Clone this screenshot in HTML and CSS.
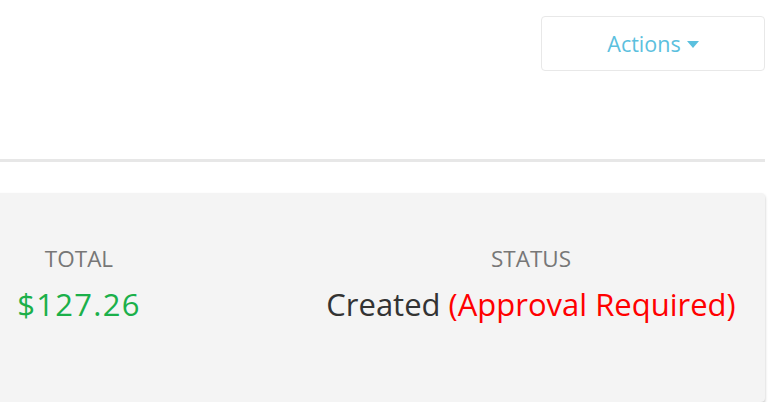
FILE: index.html
```html
<!DOCTYPE html>
<html lang="en">
<head>
    <meta charset="UTF-8">
    <meta name="viewport" content="width=device-width, initial-scale=1.0">
    <title>Order</title>
    <link rel="stylesheet" href="styles.css">
</head>
<body>
    <div class="page">
        <div class="header">
            <button class="actions-btn" type="button">
                Actions
                <svg class="caret" width="12" height="7" viewBox="0 0 12 7"><path d="M0 0h12L6 7z" fill="currentColor"/></svg>
            </button>
        </div>

        <hr class="divider">

        <div class="summary">
            <div class="summary-item">
                <div class="summary-label">Total</div>
                <div class="summary-value total">$127.26</div>
            </div>
            <div class="summary-item">
                <div class="summary-label">Status</div>
                <div class="summary-value">Created <span class="required">(Approval Required)</span></div>
            </div>
        </div>
    </div>
</body>
</html>
```

FILE: styles.css
```css
body {
    margin: 0;
    font-family: "Open Sans", sans-serif;
    background: #fff;
    overflow: hidden;
}
.page {
    width: 765px;
}
.header {
    display: flex;
    justify-content: flex-end;
    padding-top: 16px;
    height: 55px;
}
.actions-btn {
    width: 224px;
    height: 55px;
    border: 1px solid #e8e8e8;
    border-radius: 4px;
    background: #fff;
    color: #5bc0de;
    font-family: inherit;
    font-size: 21.5px;
    display: flex;
    align-items: center;
    justify-content: center;
    gap: 6px;
    padding: 0;
}
.caret {
    margin-top: 2px;
}
.divider {
    border: 0;
    height: 3px;
    background: #e7e7e7;
    margin: 88px 0 0;
}
.summary {
    margin: 31px 0 0 -155px;
    height: 209px;
    box-sizing: border-box;
    background: #f4f4f4;
    border-radius: 4px;
    box-shadow: 0 2px 3px rgba(0, 0, 0, 0.25);
    padding: 53px 8px 0;
    display: grid;
    grid-template-columns: 1fr 1fr;
    text-align: center;
}
.summary-label {
    text-transform: uppercase;
    color: #777;
    font-size: 22.5px;
    line-height: 26px;
}
.summary-value {
    color: #333;
    font-size: 31px;
    line-height: 42px;
    margin-top: 11px;
}
.total {
    color: #1bb04a;
    letter-spacing: 1.3px;
}
.required {
    color: #ff0000;
}
```
